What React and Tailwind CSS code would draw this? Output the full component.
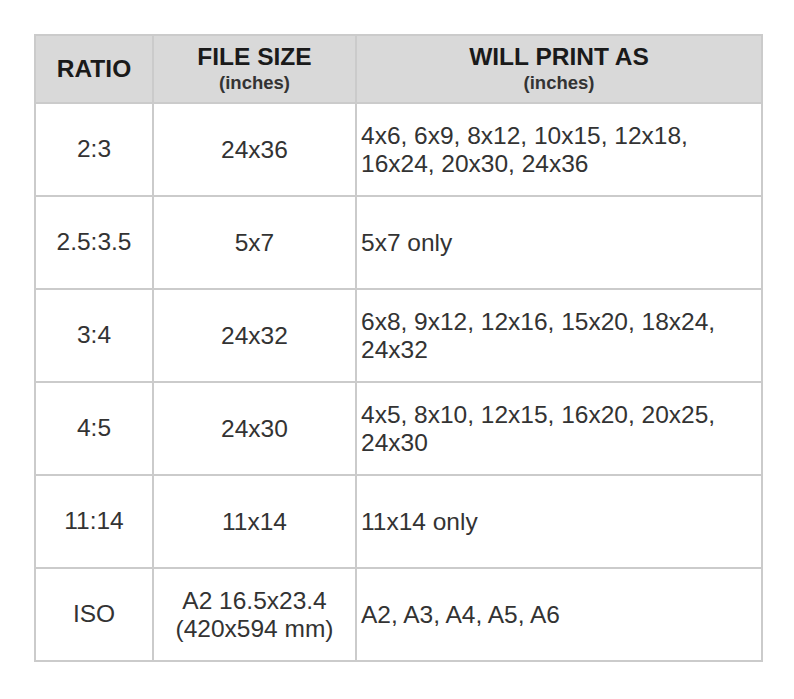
export default function App() {
  const rows = [
    ["2:3", ["24x36"], ["4x6, 6x9, 8x12, 10x15, 12x18,", "16x24, 20x30, 24x36"]],
    ["2.5:3.5", ["5x7"], ["5x7 only"]],
    ["3:4", ["24x32"], ["6x8, 9x12, 12x16, 15x20, 18x24,", "24x32"]],
    ["4:5", ["24x30"], ["4x5, 8x10, 12x15, 16x20, 20x25,", "24x30"]],
    ["11:14", ["11x14"], ["11x14 only"]],
    ["ISO", ["A2 16.5x23.4", "(420x594 mm)"], ["A2, A3, A4, A5, A6"]],
  ];
  return (
    <div className="w-[794px] h-[699px] bg-white pt-[34px] pl-[34px]" style={{ fontFamily: '"Liberation Sans", Arial, sans-serif' }}>
      <div className="grid grid-cols-[116px_201px_404px] grid-rows-[66px_repeat(6,91px)] gap-[2px] p-[2px] bg-[#cbcbcb] w-[729px]">
        <div className="bg-[#d9d9d9] flex items-center justify-center text-[24.5px] font-bold text-[#1a1a1a]">RATIO</div>
        <div className="bg-[#d9d9d9] flex flex-col items-center justify-center text-[#1a1a1a]">
          <div className="text-[24.5px] font-bold leading-[27px]">FILE SIZE</div>
          <div className="text-[18.5px] font-bold leading-[25px] text-[#333]">(inches)</div>
        </div>
        <div className="bg-[#d9d9d9] flex flex-col items-center justify-center text-[#1a1a1a]">
          <div className="text-[24.5px] font-bold leading-[27px]">WILL PRINT AS</div>
          <div className="text-[18.5px] font-bold leading-[25px] text-[#333]">(inches)</div>
        </div>
        {rows.map(([a, b, c], i) => (
          <>
            <div key={"a" + i} className="bg-white flex items-center justify-center text-[24.5px] text-[#333]">{a}</div>
            <div key={"b" + i} className="bg-white flex flex-col items-center justify-center text-[24.5px] leading-[28px] text-[#333]">
              {b.map((t, j) => <div key={j}>{t}</div>)}
            </div>
            <div key={"c" + i} className="bg-white flex flex-col justify-center pl-[4px] text-[24.5px] leading-[28px] text-[#333]">
              {c.map((t, j) => <div key={j}>{t}</div>)}
            </div>
          </>
        ))}
      </div>
    </div>
  );
}
